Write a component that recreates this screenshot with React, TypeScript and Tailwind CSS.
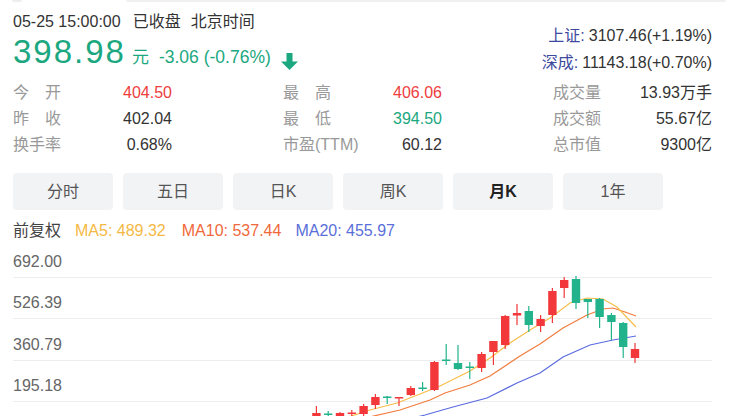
import React from 'react'

const GREEN = '#1ba880'
const RED = '#ee3d3d'
const C_GREEN = '#22b38c'
const C_RED = '#f2383b'

// [color, bodyTop, bodyBottom, wickTop, wickBottom] in page coords
const candles: ['r' | 'g', number, number, number, number][] = [
  ['r', 413, 420, 406, 420],
  ['g', 413.5, 415, 411, 419],
  ['r', 413, 419, 412, 419],
  ['r', 412.5, 414, 410, 418],
  ['r', 406, 414, 404, 416],
  ['r', 397, 405, 394, 409],
  ['g', 396.5, 398, 396, 404],
  ['r', 397, 398.5, 397, 406],
  ['r', 388, 395, 386, 396],
  ['g', 387.5, 389, 382, 391],
  ['r', 362, 390, 361, 391],
  ['g', 359.5, 361, 344, 365],
  ['g', 363, 369, 345, 370],
  ['g', 366.5, 368, 362, 379],
  ['r', 354, 368, 352, 372],
  ['r', 341, 352, 341, 365],
  ['r', 316, 345, 315, 349],
  ['r', 313, 315.5, 304, 325],
  ['g', 311, 325, 306, 332],
  ['r', 319, 326, 315, 332],
  ['r', 291, 315, 288, 323],
  ['r', 280, 288, 277, 298],
  ['g', 279, 303, 276, 309],
  ['g', 299, 302, 299, 318],
  ['g', 299, 317, 298, 328],
  ['g', 315, 322, 313, 340],
  ['g', 323, 347, 322, 358],
  ['r', 349, 358, 343, 363],
]

const ma5 = '345,418 370,410 397,403 420,394 440,386 470,371 490,358 510,343 530,330 550,318 570,303 587,298 603,299 617,307 636,327'
const ma10 = '365,418 400,410 430,400 445,393 470,385 490,376 520,356 540,344 563,328 587,315 603,309 613,308 625,312 636,316'
const ma20 = '405,420 425,415 453,407 487,398 517,383 540,373 563,357 590,345 613,340 636,336'

function Label({ a, b }: { a: string; b: string }) {
  return (
    <span className="flex w-[48px] justify-between text-[16px] text-[#999]">
      <span>{a}</span>
      <span>{b}</span>
    </span>
  )
}

function Cell({ label, value, color = '#333' }: { label: React.ReactNode; value: string; color?: string }) {
  return (
    <div className="flex w-[159px] items-center justify-between">
      {label}
      <span className="text-[16px]" style={{ color }}>{value}</span>
    </div>
  )
}

const tabs = ['分时', '五日', '日K', '周K', '月K', '1年']
const yLabels = ['692.00', '526.39', '360.79', '195.18']
const rowHeights = ['h-[36px]', 'h-[41px]', 'h-[42px]', 'h-[41px]']

export default function App() {
  return (
    <div className="w-[738px] h-[416px] overflow-hidden bg-white text-[#333] font-['Liberation_Sans','Noto_Sans_CJK_SC',sans-serif]">
      {/* cropped strip above */}
      <div className="flex h-[3px]">
        <div className="ml-[12px] h-[2px] w-[10px] rounded-b bg-[#eeeeee]" />
        <div className="ml-[104px] h-[2px] w-[600px] rounded-b bg-[#f0f0f0]" />
      </div>

      {/* header */}
      <div className="flex h-[77px] justify-between pl-[13px] pr-[26px]">
        <div className="pt-[9px]">
          <div className="flex h-[20px] items-center text-[16px] text-[#333]">
            <span>05-25 15:00:00</span>
            <span className="ml-[12px]">已收盘</span>
            <span className="ml-[10px]">北京时间</span>
          </div>
          <div className="mt-[3px] flex h-[36px] items-baseline" style={{ color: GREEN }}>
            <span className="text-[33px] leading-none tracking-[2px]">398.98</span>
            <span className="ml-[6px] text-[17px] leading-none">元</span>
            <span className="ml-[10px] text-[17.5px] leading-none">-3.06 (-0.76%)</span>
            <svg className="ml-[10px] self-start mt-[18px]" width="17" height="17" viewBox="0 0 17 17">
              <rect x="5.5" y="0" width="6" height="10" fill={GREEN} />
              <path d="M0 8.5 H17 L8.5 17 Z" fill={GREEN} />
            </svg>
          </div>
        </div>
        <div className="flex flex-col items-end gap-[7px] pt-[23px] text-[16px]">
          <div className="h-[20px] leading-[20px]">
            <span className="text-[#3d4a9e]">上证:</span>
            <span className="ml-[4px]">3107.46(+1.19%)</span>
          </div>
          <div className="h-[20px] leading-[20px]">
            <span className="text-[#3d4a9e]">深成:</span>
            <span className="ml-[4px]">11143.18(+0.70%)</span>
          </div>
        </div>
      </div>

      {/* stats */}
      <div className="flex flex-col pl-[13px]">
        <div className="flex h-[26px] gap-[111px]">
          <Cell label={<Label a="今" b="开" />} value="404.50" color={RED} />
          <Cell label={<Label a="最" b="高" />} value="406.06" color={RED} />
          <Cell label={<span className="text-[16px] text-[#999]">成交量</span>} value="13.93万手" />
        </div>
        <div className="flex h-[26px] gap-[111px]">
          <Cell label={<Label a="昨" b="收" />} value="402.04" />
          <Cell label={<Label a="最" b="低" />} value="394.50" color={GREEN} />
          <Cell label={<span className="text-[16px] text-[#999]">成交额</span>} value="55.67亿" />
        </div>
        <div className="flex h-[26px] gap-[111px]">
          <Cell label={<span className="text-[16px] text-[#999]">换手率</span>} value="0.68%" />
          <Cell label={<span className="text-[16px] text-[#999]">市盈(TTM)</span>} value="60.12" />
          <Cell label={<span className="text-[16px] text-[#999]">总市值</span>} value="9300亿" />
        </div>
      </div>

      {/* period tabs */}
      <div className="mt-[15px] flex gap-[10px] pl-[13px]">
        {tabs.map((t) => (
          <div
            key={t}
            className={
              t === '月K'
                ? 'flex h-[37px] w-[100px] items-center justify-center rounded-[4px] bg-[#f2f3f5] text-[16px] font-bold text-[#222]'
                : 'flex h-[37px] w-[100px] items-center justify-center rounded-[4px] bg-[#f2f3f5] text-[16px] text-[#555]'
            }
          >
            {t}
          </div>
        ))}
      </div>

      {/* MA legend */}
      <div className="mt-[10px] flex h-[22px] items-center pl-[13px] text-[16px]">
        <span className="text-[#444]">前复权</span>
        <span className="ml-[14px] text-[#f5b945]">MA5: 489.32</span>
        <span className="ml-[16px] text-[#f0693a]">MA10: 537.44</span>
        <span className="ml-[14px] text-[#5b6fd9]">MA20: 455.97</span>
      </div>

      {/* chart */}
      <div className="relative h-[174px] pl-[13px] pr-[26px]">
        {yLabels.map((v, i) => (
          <div key={v} className={`flex items-end border-b border-[#ededed] pb-[6px] ${rowHeights[i]}`}>
            <span className="text-[16px] leading-[18px] text-[#666]">{v}</span>
          </div>
        ))}
        <svg className="pointer-events-none absolute left-0 top-0" width="738" height="200" viewBox="0 0 738 200">
          <g transform="translate(0 -242)">
            <polyline points={ma20} fill="none" stroke="#5a6be0" strokeWidth="1.2" />
            <polyline points={ma10} fill="none" stroke="#f17c3e" strokeWidth="1.2" />
            <polyline points={ma5} fill="none" stroke="#f7bd4a" strokeWidth="1.2" />
            {candles.map(([c, bt, bb, wt, wb], i) => {
              const x = 316.4 + 11.8 * i
              const fill = c === 'r' ? C_RED : C_GREEN
              return (
                <g key={i}>
                  <rect x={x - 0.6} y={wt} width="1.2" height={wb - wt} fill={fill} />
                  <rect x={x - 4.2} y={bt} width="8.4" height={Math.max(bb - bt, 1.4)} fill={fill} />
                </g>
              )
            })}
          </g>
        </svg>
      </div>
    </div>
  )
}
